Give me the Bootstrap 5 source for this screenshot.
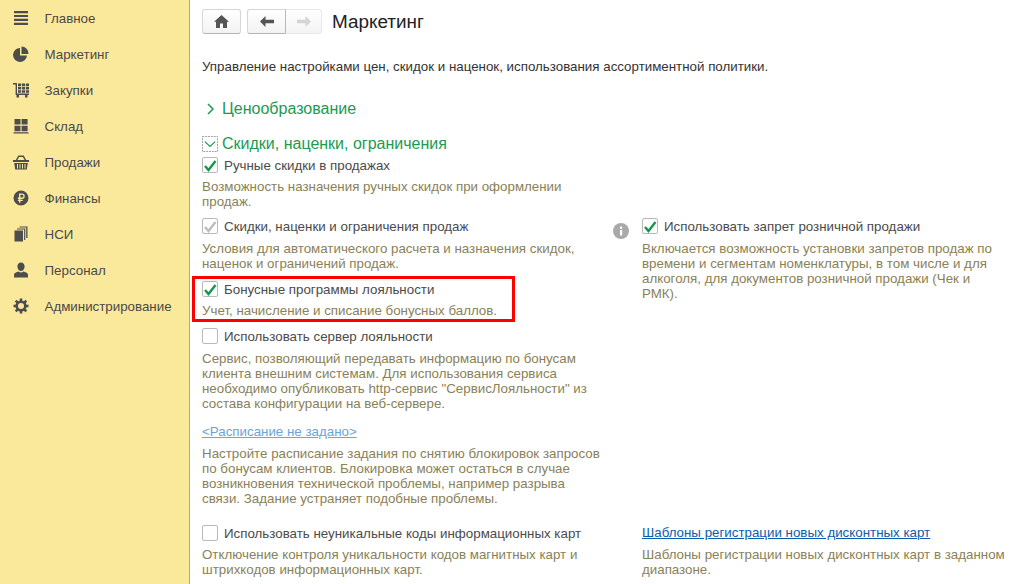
<!DOCTYPE html>
<html lang="ru">
<head>
    <meta charset="UTF-8">
    <title>Маркетинг</title>
    <link href="https://cdn.jsdelivr.net/npm/bootstrap@5.3.3/dist/css/bootstrap.min.css" rel="stylesheet">
    <style>
        html, body { height: 100%; overflow: hidden; }
        body { font-family: "Liberation Sans", Arial, sans-serif; font-size: 13.33px; line-height: 15px; color: #4b4b4b; background: #fff; }
        .side-panel { width: 190px; height: 584px; background: #fbe99b; border-right: 1px solid #a8a8a0; flex-shrink: 0; }
        .side-item { height: 36px; display: flex; align-items: center; color: #4a4a4a; font-size: 13.33px; }
        .side-ico { width: 18px; height: 18px; margin-left: 12px; margin-right: 14.5px; flex-shrink: 0; fill: #4d4d4d; }
        .work-area { padding-left: 12px; width: 834px; }
        .top-bar { height: 34px; padding-top: 9px; }
        .tool-btn { height: 25px; width: 39px; background: linear-gradient(#fff, #f3f3f3); border: 1px solid #d6d6d6; border-bottom-color: #b4b4b4; display: flex; align-items: center; justify-content: center; border-radius: 3px; }
        .tool-btn.joined-l { border-radius: 3px 0 0 3px; border-right-color: #b8b8b8; }
        .tool-btn.joined-r { border-radius: 0 3px 3px 0; border-left: 0; width: 36px; border-color: #e8e8e8; }
        .nav-pair { margin-left: 6px; }
        .page-title { font-size: 18.9px; color: #222; line-height: 25px; margin-left: 10px; }
        .page-note { color: #333; margin-top: 25px; }
        .group-head { color: #1c9a52; font-size: 16px; line-height: 20px; }
        .head-one { margin-top: 25px; }
        .head-two { margin-top: 15px; }
        .chevron { margin-left: 3px; margin-right: 5px; }
        .chk { width: 16px; height: 16px; border: 1px solid #b9b9b9; border-radius: 2px; background: #fff; flex-shrink: 0; margin-right: 6px; display: block; }
        .chk-line { display: flex; align-items: center; height: 16px; color: #4b4b4b; }
        .hint { color: #8a8158; margin-top: 7px; }
        .hint-tight { margin-top: 6px; }
        .left-col { width: 402px; flex-shrink: 0; }
        .right-col { margin-left: 38px; width: 364px; position: relative; }
        .info-dot { position: absolute; left: -29px; top: 5px; }
        .red-frame { border: 3px solid #f00; margin: 5px 0 6px -10px; padding: 2px 0 3px 7px; width: 323px; height: 46px; }
        .red-frame .hint { margin-top: 6px; white-space: nowrap; }
        .sched-link { color: #6aa5d8; text-decoration: underline; margin-top: 13px; }
        .card-link-blue { color: #0b5cad; text-decoration: underline; height: 16px; }
        .row-one { margin-top: 9px; }
        .row-two { margin-top: 19px; }
    </style>
</head>
<body>
<div class="d-flex">
    <div class="side-panel">
        <div class="side-item"><svg class="side-ico" viewBox="0 0 18 18"><path d="M2 2h14v2.200H2zM2 5.900h14v2.200H2zM2 9.800h14V12H2zM2 13.700h14v2.200H2z"/></svg>Главное</div>
        <div class="side-item"><svg class="side-ico" viewBox="0 0 18 18"><path d="M8 3a7 7 0 1 0 7 7.500H8zM9.500 1.600v7.400H16.500a7 7 0 0 0-7-7.400z"/></svg>Маркетинг</div>
        <div class="side-item"><svg class="side-ico" viewBox="0 0 18 18"><path d="M1 2h3.400l.6.600V12.500h12v1.500H3.600V3.500H1zM6 2.500h3.200v2.800H6zM10 2.500h3.200v2.800H10zM14 2.500h3v2.800h-3zM6 6.100h3.200v2.400H6zM10 6.100h3.200v2.400H10zM14 6.100h3v2.400h-3zM6 9.300h3.200v2.400H6zM10 9.300h3.200v2.400H10zM14 9.300h3v2.400h-3zM4.500 14h2.500v2.500H4.500zM13 14h2.500v2.500H13z"/></svg>Закупки</div>
        <div class="side-item"><svg class="side-ico" viewBox="0 0 18 18"><path d="M2.500 2h6v5.600h-6zM9.600 2h6v5.600h-6zM2.500 8.700h6v5.600h-6zM9.600 8.700h6v5.600h-6zM1.500 15.200h15v1.300h-15z"/></svg>Склад</div>
        <div class="side-item"><svg class="side-ico" viewBox="0 0 18 18"><path fill-rule="evenodd" d="M1 7h2.800l2.500-4.500h5.400L14.200 7H17v2H1zM5.400 7h7.200l-1.700-3H7.100zM2.200 10h13.600l-1 6.500H3.200zM5 11v4.500h1V11zM7.500 11v4.500h1V11zM10 11v4.500h1V11zM12.500 11v4.500h1V11z"/></svg>Продажи</div>
        <div class="side-item"><svg class="side-ico" viewBox="0 0 18 18"><path fill-rule="evenodd" d="M9 1.500a7.500 7.500 0 1 0 0 15 7.500 7.500 0 0 0 0-15zM7 4.500h3a2.700 2.700 0 0 1 0 5.400H8.400v.9h2.400v1.300H8.400v1.600H7v-1.600H5.800v-1.300H7v-.9H5.800V8.600H7zM8.400 5.800v2.800H10a1.400 1.400 0 0 0 0-2.800z"/></svg>Финансы</div>
        <div class="side-item"><svg class="side-ico" viewBox="0 0 18 18"><path d="M2.500 5.500h8.500v11H2.500zM5 3.500h8.300v11.400h-1.200V4.500H5zM7.500 1.500h8v11.500h-1.300V2.600H7.500z"/></svg>НСИ</div>
        <div class="side-item"><svg class="side-ico" viewBox="0 0 18 18"><path d="M9 1.500c2.300 0 3.600 1.700 3.600 4 0 2.400-1.600 4.500-3.600 4.500S5.400 7.900 5.400 5.500c0-2.300 1.300-4 3.600-4zM6.700 10.600c.6.600 1.400.9 2.300.9s1.700-.3 2.300-.9c2.400.5 4.700 1.400 4.700 3.400v2.500H2V14c0-2 2.300-2.900 4.700-3.400z"/></svg>Персонал</div>
        <div class="side-item"><svg class="side-ico" viewBox="0 0 18 18"><g transform="translate(9 9)"><circle r="4.300" fill="none" stroke="#4d4d4d" stroke-width="2.600"/><g fill="#4d4d4d"><rect x="-1.300" y="-7.500" width="2.600" height="3"/><rect x="-1.300" y="4.500" width="2.600" height="3"/><rect x="-7.500" y="-1.300" width="3" height="2.600"/><rect x="4.500" y="-1.300" width="3" height="2.600"/><rect x="-1.300" y="-7.500" width="2.600" height="3" transform="rotate(45)"/><rect x="-1.300" y="4.500" width="2.600" height="3" transform="rotate(45)"/><rect x="-7.500" y="-1.300" width="3" height="2.600" transform="rotate(45)"/><rect x="4.500" y="-1.300" width="3" height="2.600" transform="rotate(45)"/></g></g></svg>Администрирование</div>
    </div>
    <div class="work-area">
        <div class="top-bar d-flex align-items-center">
            <div class="tool-btn"><svg width="15" height="13" viewBox="0 0 15 13"><path fill="#555" d="M7.500 0 15 6.800h-2V13H9V8.500H6V13H2V6.800H0z"/></svg></div>
            <div class="d-flex nav-pair">
                <div class="tool-btn joined-l"><svg width="14" height="11" viewBox="0 0 14 11"><path fill="#555" d="M5.500 0v3.800H14v3.400H5.500V11L0 5.500z"/></svg></div>
                <div class="tool-btn joined-r"><svg width="14" height="11" viewBox="0 0 14 11"><path fill="#d4d4d4" d="M8.500 0v3.800H0v3.400h8.500V11L14 5.500z"/></svg></div>
            </div>
            <div class="page-title">Маркетинг</div>
        </div>
        <div class="page-note">Управление настройками цен, скидок и наценок, использования ассортиментной политики.</div>

        <div class="group-head head-one d-flex align-items-center">
            <svg class="chevron" width="12" height="14" viewBox="0 0 12 14"><path d="M3 2l5 5-5 5" fill="none" stroke="#1c9a52" stroke-width="1.500"/></svg>Ценообразование
        </div>

        <div class="group-head head-two d-flex align-items-center">
            <svg class="me-1" width="16" height="16" viewBox="0 0 17 17"><rect x=".5" y=".5" width="16" height="16" fill="none" stroke="#999" stroke-dasharray="2 1"/><path d="M3 6l5.500 5L14 6" fill="none" stroke="#1c9a52" stroke-width="1.300"/></svg>Скидки, наценки, ограничения
        </div>

        <div class="chk-line" style="margin-top:3px"><span class="chk"><svg width="14" height="14" viewBox="0 0 14 14"><path d="M2 7l3.500 4L12.500 2" fill="none" stroke="#129a4c" stroke-width="2.400"/></svg></span>Ручные скидки в продажах</div>
        <div class="hint hint-tight left-col">Возможность назначения ручных скидок при оформлении продаж.</div>

        <div class="d-flex row-one">
            <div class="left-col">
                <div class="chk-line"><span class="chk"><svg width="14" height="14" viewBox="0 0 14 14"><path d="M2 7l3.500 4L12.500 2" fill="none" stroke="#bdbdbd" stroke-width="2.400"/></svg></span>Скидки, наценки и ограничения продаж</div>
                <div class="hint">Условия для автоматического расчета и назначения скидок, наценок и ограничений продаж.</div>
                <div class="red-frame">
                    <div class="chk-line"><span class="chk"><svg width="14" height="14" viewBox="0 0 14 14"><path d="M2 7l3.500 4L12.500 2" fill="none" stroke="#129a4c" stroke-width="2.400"/></svg></span>Бонусные программы лояльности</div>
                    <div class="hint">Учет, начисление и списание бонусных баллов.</div>
                </div>
                <div class="chk-line"><span class="chk"></span>Использовать сервер лояльности</div>
                <div class="hint">Сервис, позволяющий передавать информацию по бонусам клиента внешним системам. Для использования сервиса необходимо опубликовать http-сервис "СервисЛояльности" из состава конфигурации на веб-сервере.</div>
                <div class="sched-link">&lt;Расписание не задано&gt;</div>
                <div class="hint">Настройте расписание задания по снятию блокировок запросов по бонусам клиентов. Блокировка может остаться в случае возникновения технической проблемы, например разрыва связи. Задание устраняет подобные проблемы.</div>
            </div>
            <div class="right-col">
                <svg class="info-dot" width="16" height="16" viewBox="0 0 16 16"><circle cx="8" cy="8" r="8" fill="#a9a9a9"/><rect x="7" y="7" width="2.200" height="5.500" fill="#fff"/><rect x="7" y="3.600" width="2.200" height="2.200" fill="#fff"/></svg>
                <div class="chk-line"><span class="chk"><svg width="14" height="14" viewBox="0 0 14 14"><path d="M2 7l3.500 4L12.500 2" fill="none" stroke="#129a4c" stroke-width="2.400"/></svg></span>Использовать запрет розничной продажи</div>
                <div class="hint">Включается возможность установки запретов продаж по времени и сегментам номенклатуры, в том числе и для алкоголя, для документов розничной продажи (Чек и РМК).</div>
            </div>
        </div>

        <div class="d-flex row-two">
            <div class="left-col">
                <div class="chk-line"><span class="chk"></span>Использовать неуникальные коды информационных карт</div>
                <div class="hint hint-tight">Отключение контроля уникальности кодов магнитных карт и штрихкодов информационных карт.</div>
            </div>
            <div class="right-col">
                <div class="card-link-blue">Шаблоны регистрации новых дисконтных карт</div>
                <div class="hint hint-tight">Шаблоны регистрации новых дисконтных карт в заданном диапазоне.</div>
            </div>
        </div>
    </div>
</div>
<script src="https://cdn.jsdelivr.net/npm/bootstrap@5.3.3/dist/js/bootstrap.bundle.min.js"></script>
</body>
</html>
